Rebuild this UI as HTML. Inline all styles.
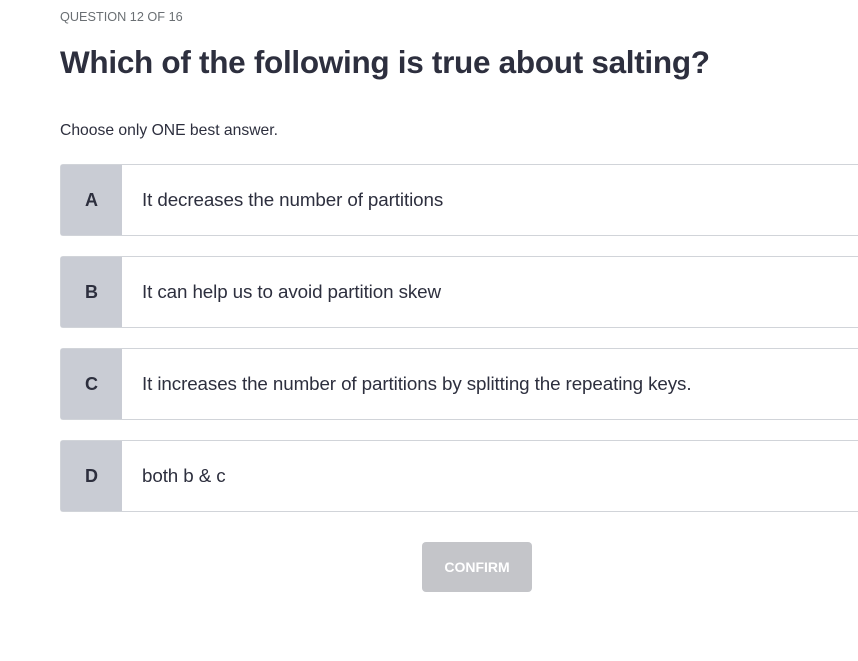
<!DOCTYPE html>
<html><head><style>
body{margin:0;background:#fff;font-family:"Liberation Sans",sans-serif;color:#2d2f3e;width:858px;height:661px;overflow:hidden;position:relative}
.q{position:absolute;left:60px;top:10px;font-size:12.7px;color:#6a6f73}
h1{position:absolute;left:60px;top:44px;margin:0;font-size:31.5px;font-weight:bold;color:#2d2f3e;letter-spacing:-0.3px}
.c{position:absolute;left:60px;top:122px;font-size:15.7px}
.o{position:absolute;left:60px;width:820px;height:70px;border:1px solid #d1d4d9;border-right:none;border-radius:3px 0 0 3px;background:#fff}
.o .l{position:absolute;left:0;top:0;width:61px;height:70px;background:#c9ccd4;font-weight:bold;font-size:18px;text-align:center;line-height:70px;color:#2d2f3e}
.o .t{position:absolute;left:81px;top:0;line-height:70px;font-size:18.8px;color:#2d2f3e;letter-spacing:-0.1px}
.b{position:absolute;left:422px;top:542px;width:110px;height:50px;background:#c4c5c9;border-radius:4px;color:#fff;font-weight:bold;font-size:14px;text-align:center;line-height:50px}
</style></head><body>
<div class="q">QUESTION 12 OF 16</div>
<h1>Which of the following is true about salting?</h1>
<div class="c">Choose only ONE best answer.</div>
<div class="o" style="top:164px"><div class="l">A</div><div class="t">It decreases the number of partitions</div></div>
<div class="o" style="top:256px"><div class="l">B</div><div class="t">It can help us to avoid partition skew</div></div>
<div class="o" style="top:348px"><div class="l">C</div><div class="t">It increases the number of partitions by splitting the repeating keys.</div></div>
<div class="o" style="top:440px"><div class="l">D</div><div class="t">both b &amp; c</div></div>
<div class="b">CONFIRM</div>
</body></html>
